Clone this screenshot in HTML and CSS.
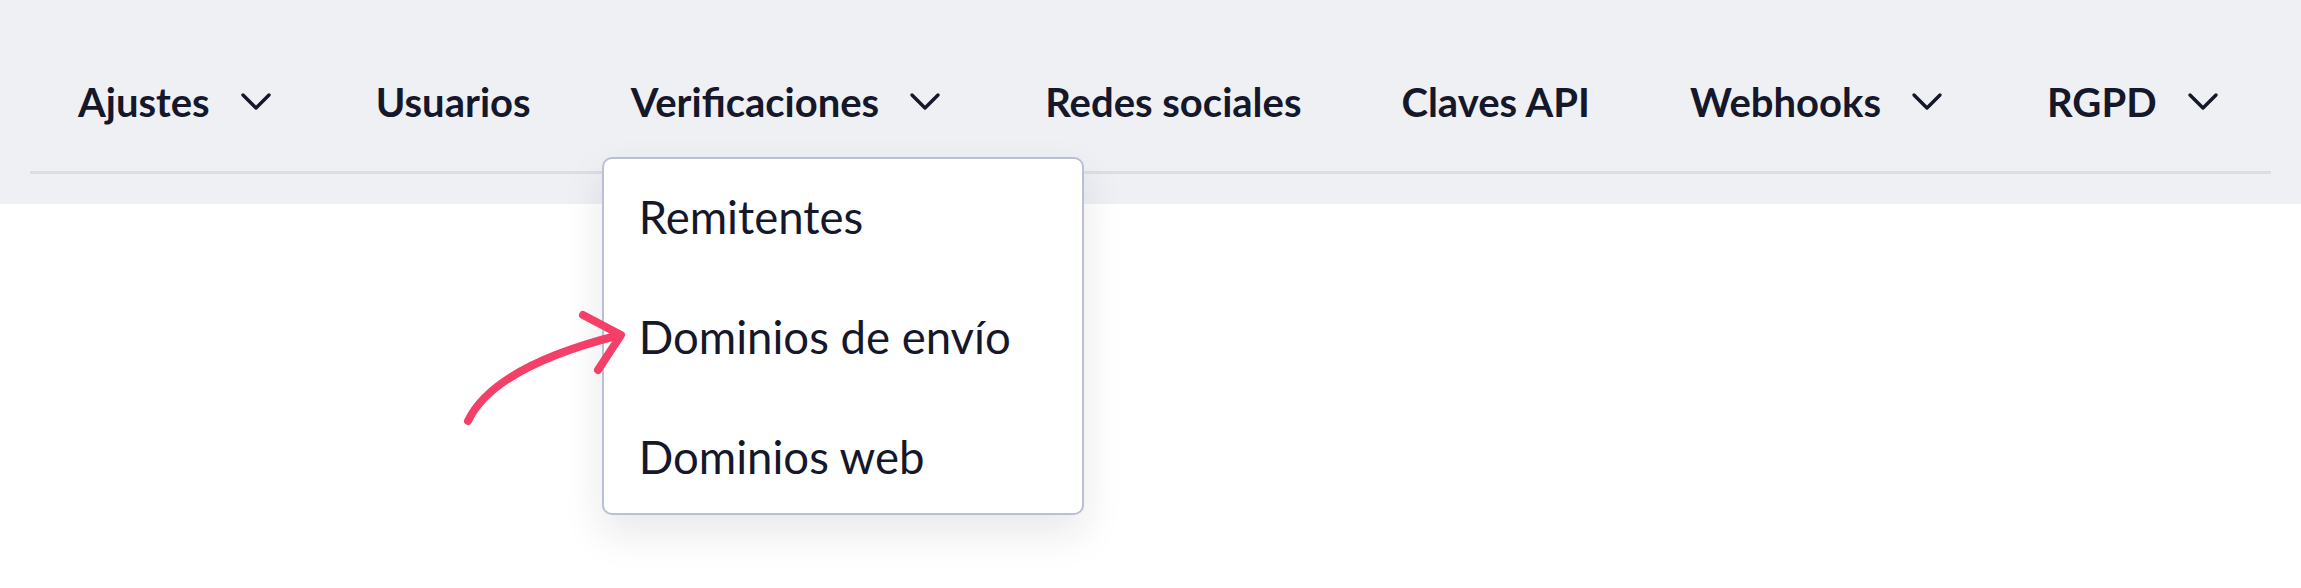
FILE: index.html
```html
<!DOCTYPE html>
<html lang="es">
<head>
    <meta charset="UTF-8">
    <meta name="viewport" content="width=device-width, initial-scale=1.0">
    <title>Ajustes - Verificaciones</title>
    <link rel="stylesheet" href="styles.css">
</head>
<body>
    <header class="settings-header">
        <nav class="settings-nav" aria-label="Ajustes">
            <ul class="nav-list">
                <li class="nav-item">
                    <a href="#" class="nav-link">Ajustes</a>
                    <svg class="chevron" viewBox="0 0 40 40" aria-hidden="true"><path d="M7 13 L20 26 L33 13"/></svg>
                </li>
                <li class="nav-item">
                    <a href="#" class="nav-link">Usuarios</a>
                </li>
                <li class="nav-item is-open">
                    <a href="#" class="nav-link">Verificaciones</a>
                    <svg class="chevron" viewBox="0 0 40 40" aria-hidden="true"><path d="M7 13 L20 26 L33 13"/></svg>

                    <!-- open dropdown -->
                    <ul class="dropdown" role="menu">
                        <li><a href="#" class="dropdown-link" role="menuitem">Remitentes</a></li>
                        <li><a href="#" class="dropdown-link" role="menuitem">Dominios de envío</a></li>
                        <li><a href="#" class="dropdown-link" role="menuitem">Dominios web</a></li>
                    </ul>
                </li>
                <li class="nav-item">
                    <a href="#" class="nav-link">Redes sociales</a>
                </li>
                <li class="nav-item">
                    <a href="#" class="nav-link">Claves API</a>
                </li>
                <li class="nav-item">
                    <a href="#" class="nav-link">Webhooks</a>
                    <svg class="chevron" viewBox="0 0 40 40" aria-hidden="true"><path d="M7 13 L20 26 L33 13"/></svg>
                </li>
                <li class="nav-item">
                    <a href="#" class="nav-link">RGPD</a>
                    <svg class="chevron" viewBox="0 0 40 40" aria-hidden="true"><path d="M7 13 L20 26 L33 13"/></svg>
                </li>
            </ul>
        </nav>
    </header>

    <main class="content"></main>

    <!-- hand-drawn pointer to "Dominios de envío" -->
    <svg class="pointer-arrow" viewBox="0 0 200 140" aria-hidden="true">
        <path d="M18 121 C40 75, 110 50, 170 35"/>
        <path d="M133 15 L171 35 L148 70"/>
    </svg>
</body>
</html>
```

FILE: styles.css
```css
:root {
    --header-bg: #eff0f4;
    --rule: #dcdde6;
    --text: #15172a;
    --menu-border: #b9c0d4;
    --accent: #f43f68;
}

* {
    box-sizing: border-box;
}

body {
    margin: 0;
    position: relative;
    min-height: 100vh;
    background: #ffffff;
    color: var(--text);
    font-family: 'Lato', 'Noto Sans', sans-serif;
}

a {
    color: inherit;
    text-decoration: none;
}

.settings-header {
    background: var(--header-bg);
    padding: 0 30px 30px;
}

.settings-nav {
    padding-top: 72px;
    padding-bottom: 39px;
    border-bottom: 3px solid var(--rule);
}

.nav-list {
    list-style: none;
    margin: 0;
    padding: 0;
    display: flex;
    align-items: center;
}

.nav-item {
    position: relative;
    display: flex;
    align-items: center;
    height: 60px;
    padding: 0 50px;
}

.nav-item:first-child {
    padding-left: 48px;
}

.nav-link {
    font-size: 40px;
    font-weight: 700;
    line-height: 60px;
    white-space: nowrap;
}

.chevron {
    width: 40px;
    height: 40px;
    margin-left: 26px;
    fill: none;
    stroke: var(--text);
    stroke-width: 3.4;
    stroke-linecap: round;
    stroke-linejoin: round;
}

.dropdown {
    position: absolute;
    top: 85px;
    left: 21px;
    z-index: 2;
    width: 482px;
    margin: 0;
    padding: 0;
    list-style: none;
    background: #ffffff;
    border: 2px solid var(--menu-border);
    border-radius: 10px;
    box-shadow: 0 18px 40px rgba(30, 34, 60, 0.10);
}

.dropdown li + li {
    margin-top: 6px;
}

.dropdown-link {
    display: block;
    padding: 30px 35px 28px;
    font-size: 45.5px;
    font-weight: 400;
    line-height: 56px;
    white-space: nowrap;
}

.content {
    min-height: 384px;
}

.pointer-arrow {
    position: absolute;
    left: 450px;
    top: 300px;
    z-index: 3;
    width: 200px;
    height: 140px;
    fill: none;
    stroke: var(--accent);
    stroke-width: 8;
    stroke-linecap: round;
    stroke-linejoin: round;
    pointer-events: none;
}
```
